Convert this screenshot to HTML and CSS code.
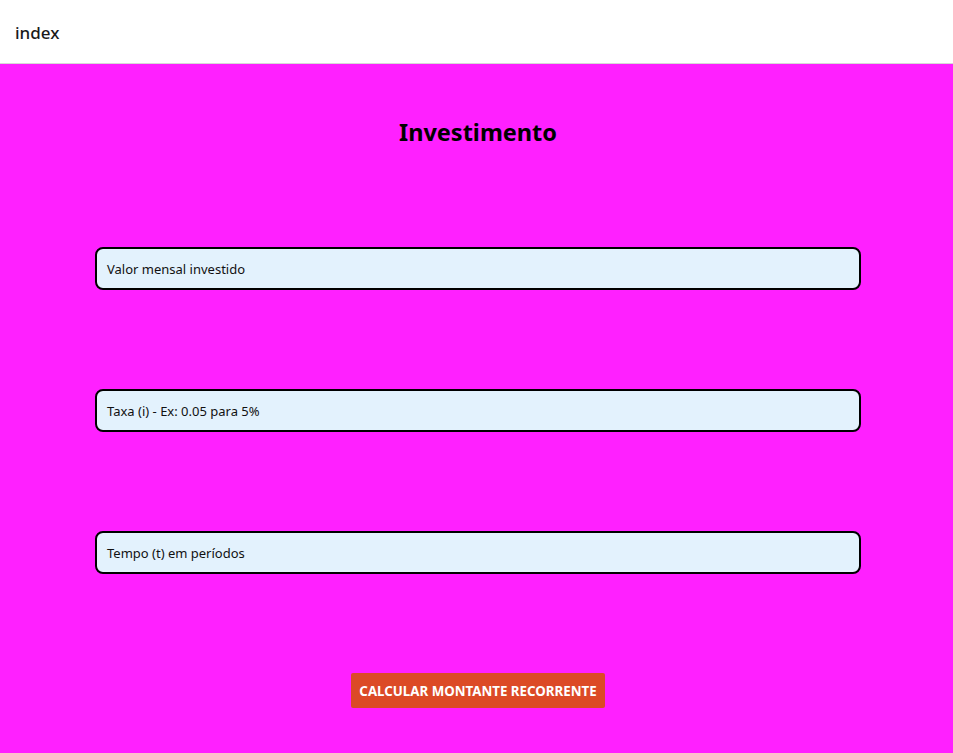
FILE: index.html
```html
<!DOCTYPE html>
<html lang="pt">
<head>
<meta charset="utf-8">
<title>index</title>
<link rel="stylesheet" href="styles.css">
</head>
<body>
<header class="topbar"><span class="topbar-title">index</span></header>
<main class="content">
  <h1 class="title">Investimento</h1>
  <div class="field">Valor mensal investido</div>
  <div class="field">Taxa (i) - Ex: 0.05 para 5%</div>
  <div class="field">Tempo (t) em períodos</div>
  <button class="btn">CALCULAR MONTANTE RECORRENTE</button>
</main>
</body>
</html>
```
FILE: styles.css
```css
html, body {
  margin: 0;
  padding: 0;
  height: 100%;
}
body {
  font-family: "Noto Sans", "Open Sans", sans-serif;
  background: #ff20ff;
  display: flex;
  flex-direction: column;
}
.topbar {
  background: #ffffff;
  border-bottom: 1px solid #d8d8d8;
  display: flex;
  align-items: center;
  padding-left: 15px;
  box-sizing: border-box;
  flex: 0 0 auto;
  height: 64px;
}
.topbar-title {
  font-size: 17px;
  font-weight: 500;
  color: #1a1a1a;
  margin-top: 1px;
}
.content {
  flex: 1;
  display: flex;
  flex-direction: column;
  align-items: center;
  padding-top: 51px;
  padding-left: 3px;
  gap: 99px;
}
.title {
  margin: 0 0 -2px;
  font-size: 23.5px;
  line-height: 35px;
  font-weight: 700;
  color: #000;
}
.field {
  width: 766px;
  height: 43px;
  box-sizing: border-box;
  border: 2px solid #000;
  border-radius: 8px;
  background: #e3f2fd;
  display: flex;
  align-items: center;
  padding-left: 10px;
  font-size: 13px;
  color: #111;
}
.btn {
  height: 35px;
  padding: 0;
  border: none;
  border-radius: 2px;
  background: #dc4a26;
  color: #fff;
  font-family: inherit;
  font-weight: 700;
  font-size: 13.3px;
  white-space: nowrap;
  width: 254px;
}
```
